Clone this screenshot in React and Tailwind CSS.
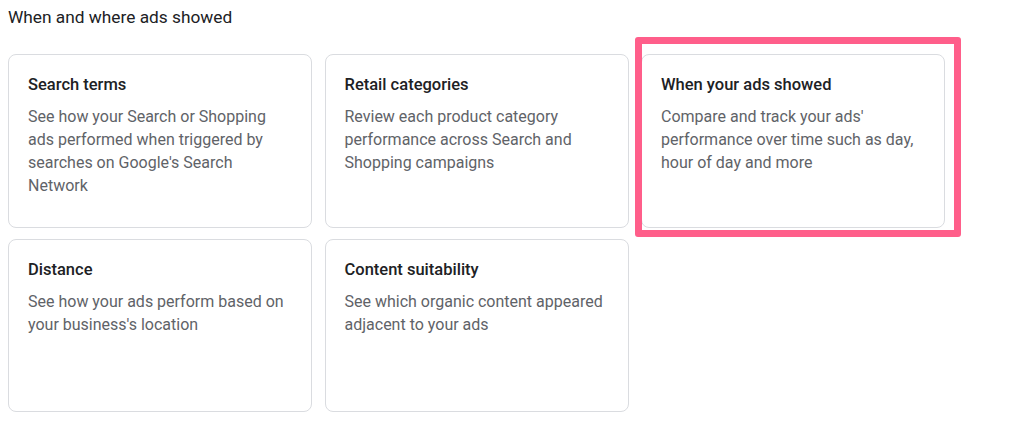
const cards = [
  {
    title: 'Search terms',
    text: "See how your Search or Shopping ads performed when triggered by searches on Google's Search Network",
  },
  {
    title: 'Retail categories',
    text: 'Review each product category performance across Search and Shopping campaigns',
  },
  {
    title: 'When your ads showed',
    text: "Compare and track your ads' performance over time such as day, hour of day and more",
    highlight: true,
  },
  {
    title: 'Distance',
    text: "See how your ads perform based on your business's location",
  },
  {
    title: 'Content suitability',
    text: 'See which organic content appeared adjacent to your ads',
  },
]

const Card = ({ title, text, highlight }) => {
  return (
    <div className="relative">
      {highlight && (
        <div className="absolute -left-[6px] -right-[16px] -top-[17px] -bottom-[9px] border-[7px] border-[#ff5e8a] rounded-[3px] pointer-events-none" />
      )}
      <div className="h-full bg-white border border-[#dadce0] rounded-lg pl-[19px] pr-5 pt-[19px]">
        <p className="text-[16.5px] leading-[22px] font-medium text-[#202124]">{title}</p>
        <p className="mt-[9px] text-[16px] leading-[23px] text-[#5f6368]">{text}</p>
      </div>
    </div>
  )
}

export default function App() {
  return (
    <div className="w-[1024px] h-[428px] bg-white overflow-hidden font-['Roboto',sans-serif]">
      <div className="pl-2 pt-[6px]">
        <h2 className="text-[17.3px] leading-[22px] text-[#202124]">When and where ads showed</h2>
        <div className="mt-[26px] grid grid-cols-[repeat(3,304px)] grid-rows-[174px_173px] gap-x-[12.5px] gap-y-[11px]">
          {cards.map((c) => (
            <Card key={c.title} {...c} />
          ))}
        </div>
      </div>
    </div>
  )
}
